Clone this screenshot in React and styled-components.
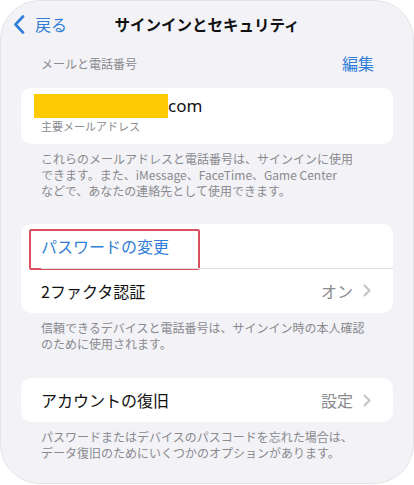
import React from 'react';
import styled, { createGlobalStyle } from 'styled-components';

const GlobalStyle = createGlobalStyle`
  body {
    margin: 0;
    background: #ffffff;
    font-family: 'Noto Sans CJK JP', 'Noto Sans', sans-serif;
    -webkit-font-smoothing: antialiased;
  }
`;

const BLUE = '#2f7ed8';
const GRAY = '#8a8a8e';

// 端末の画面枠
const Screen = styled.div`
  box-sizing: border-box;
  width: 414px;
  height: 484px;
  background: #f2f2f7;
  border: 1px solid #e3e3e6;
  border-radius: 40px;
  overflow: hidden;
`;

// ナビゲーションバー
const NavBar = styled.div`
  position: relative;
  height: 46px;
  display: flex;
  align-items: center;
  justify-content: center;
`;

const BackButton = styled.div`
  position: absolute;
  left: 12px;
  top: 0;
  bottom: 0;
  display: flex;
  align-items: center;
  gap: 10px;
  color: ${BLUE};
  font-size: 16px;
`;

const Title = styled.h1`
  margin: 0;
  font-size: 15.5px;
  font-weight: 700;
  color: #111;
`;

const SectionHeader = styled.div`
  height: 32px;
  display: flex;
  align-items: center;
  justify-content: space-between;
  padding: 0 39px 0 40px;
  margin-bottom: 9px;
`;

const HeaderLabel = styled.span`
  font-size: 12px;
  color: ${GRAY};
`;

const EditLink = styled.span`
  font-size: 16px;
  color: ${BLUE};
`;

const Card = styled.div`
  margin: 0 20px;
  background: #ffffff;
  border-radius: 10px;
  overflow: hidden;
`;

const EmailBlock = styled.div`
  height: 56px;
  box-sizing: border-box;
  padding: 6px 0 0 13px;
`;

const EmailLine = styled.div`
  display: flex;
  align-items: center;
  height: 24px;
`;

const Masked = styled.span`
  display: block;
  width: 134px;
  height: 24px;
  background: #fecb02;
`;

const Domain = styled.span`
  font-family: 'Noto Sans', sans-serif;
  font-size: 17px;
  color: #111;
  line-height: 24px;
`;

const EmailCaption = styled.div`
  margin: 1px 0 0 7px;
  font-size: 11px;
  line-height: 14px;
  color: ${GRAY};
`;

const Footnote = styled.p`
  margin: 7px 0 ${(p) => p.$after}px;
  padding: 0 40px;
  font-size: 12px;
  line-height: 16px;
  color: ${GRAY};
  white-space: pre-line;
`;

const Row = styled.div`
  position: relative;
  height: ${(p) => p.$h || 44}px;
  display: flex;
  align-items: center;
  padding: 0 22px 0 20px;
  & + & {
    height: 45px;
  }
  & + &::before {
    content: '';
    position: absolute;
    top: 0;
    left: 20px;
    right: 0;
    height: 1px;
    background: #dedee2;
  }
`;

const RowLabel = styled.span`
  flex: 1;
  font-size: 16px;
  color: ${(p) => (p.$link ? BLUE : '#111')};
`;

const RowValue = styled.span`
  display: flex;
  align-items: center;
  gap: 10px;
  font-size: 16px;
  color: ${GRAY};
`;

// パスワード変更の強調枠
const Highlight = styled.span`
  position: absolute;
  left: 8px;
  top: 5px;
  width: 171px;
  height: 41px;
  box-sizing: border-box;
  border: 2px solid #d9515f;
  border-radius: 2px;
  pointer-events: none;
`;

const BackChevron = () => (
  <svg width="12" height="19" viewBox="0 0 12 19">
    <path d="M10 1.5 L2.5 9.5 L10 17.5" fill="none" stroke={BLUE} strokeWidth="2.6" strokeLinecap="round" strokeLinejoin="round" />
  </svg>
);

const Disclosure = () => (
  <svg width="8" height="13" viewBox="0 0 8 13">
    <path d="M1.5 1.5 L6.5 6.5 L1.5 11.5" fill="none" stroke="#c4c4c8" strokeWidth="2" strokeLinecap="round" strokeLinejoin="round" />
  </svg>
);

export default function App() {
  return (
    <>
      <GlobalStyle />
      <Screen>
        <NavBar>
          <BackButton>
            <BackChevron />
            戻る
          </BackButton>
          <Title>サインインとセキュリティ</Title>
        </NavBar>

        <SectionHeader>
          <HeaderLabel>メールと電話番号</HeaderLabel>
          <EditLink>編集</EditLink>
        </SectionHeader>

        <Card>
          <EmailBlock>
            <EmailLine>
              <Masked />
              <Domain>com</Domain>
            </EmailLine>
            <EmailCaption>主要メールアドレス</EmailCaption>
          </EmailBlock>
        </Card>
        <Footnote $after={25}>
          {'これらのメールアドレスと電話番号は、サインインに使用\nできます。また、iMessage、FaceTime、Game Center\nなどで、あなたの連絡先として使用できます。'}
        </Footnote>

        <Card>
          <Row>
            <RowLabel $link>パスワードの変更</RowLabel>
            <Highlight />
          </Row>
          <Row>
            <RowLabel>2ファクタ認証</RowLabel>
            <RowValue>
              オン
              <Disclosure />
            </RowValue>
          </Row>
        </Card>
        <Footnote $after={26}>
          {'信頼できるデバイスと電話番号は、サインイン時の本人確認\nのために使用されます。'}
        </Footnote>

        <Card>
          <Row>
            <RowLabel>アカウントの復旧</RowLabel>
            <RowValue>
              設定
              <Disclosure />
            </RowValue>
          </Row>
        </Card>
        <Footnote $after={0}>
          {'パスワードまたはデバイスのパスコードを忘れた場合は、\nデータ復旧のためにいくつかのオプションがあります。'}
        </Footnote>
      </Screen>
    </>
  );
}
